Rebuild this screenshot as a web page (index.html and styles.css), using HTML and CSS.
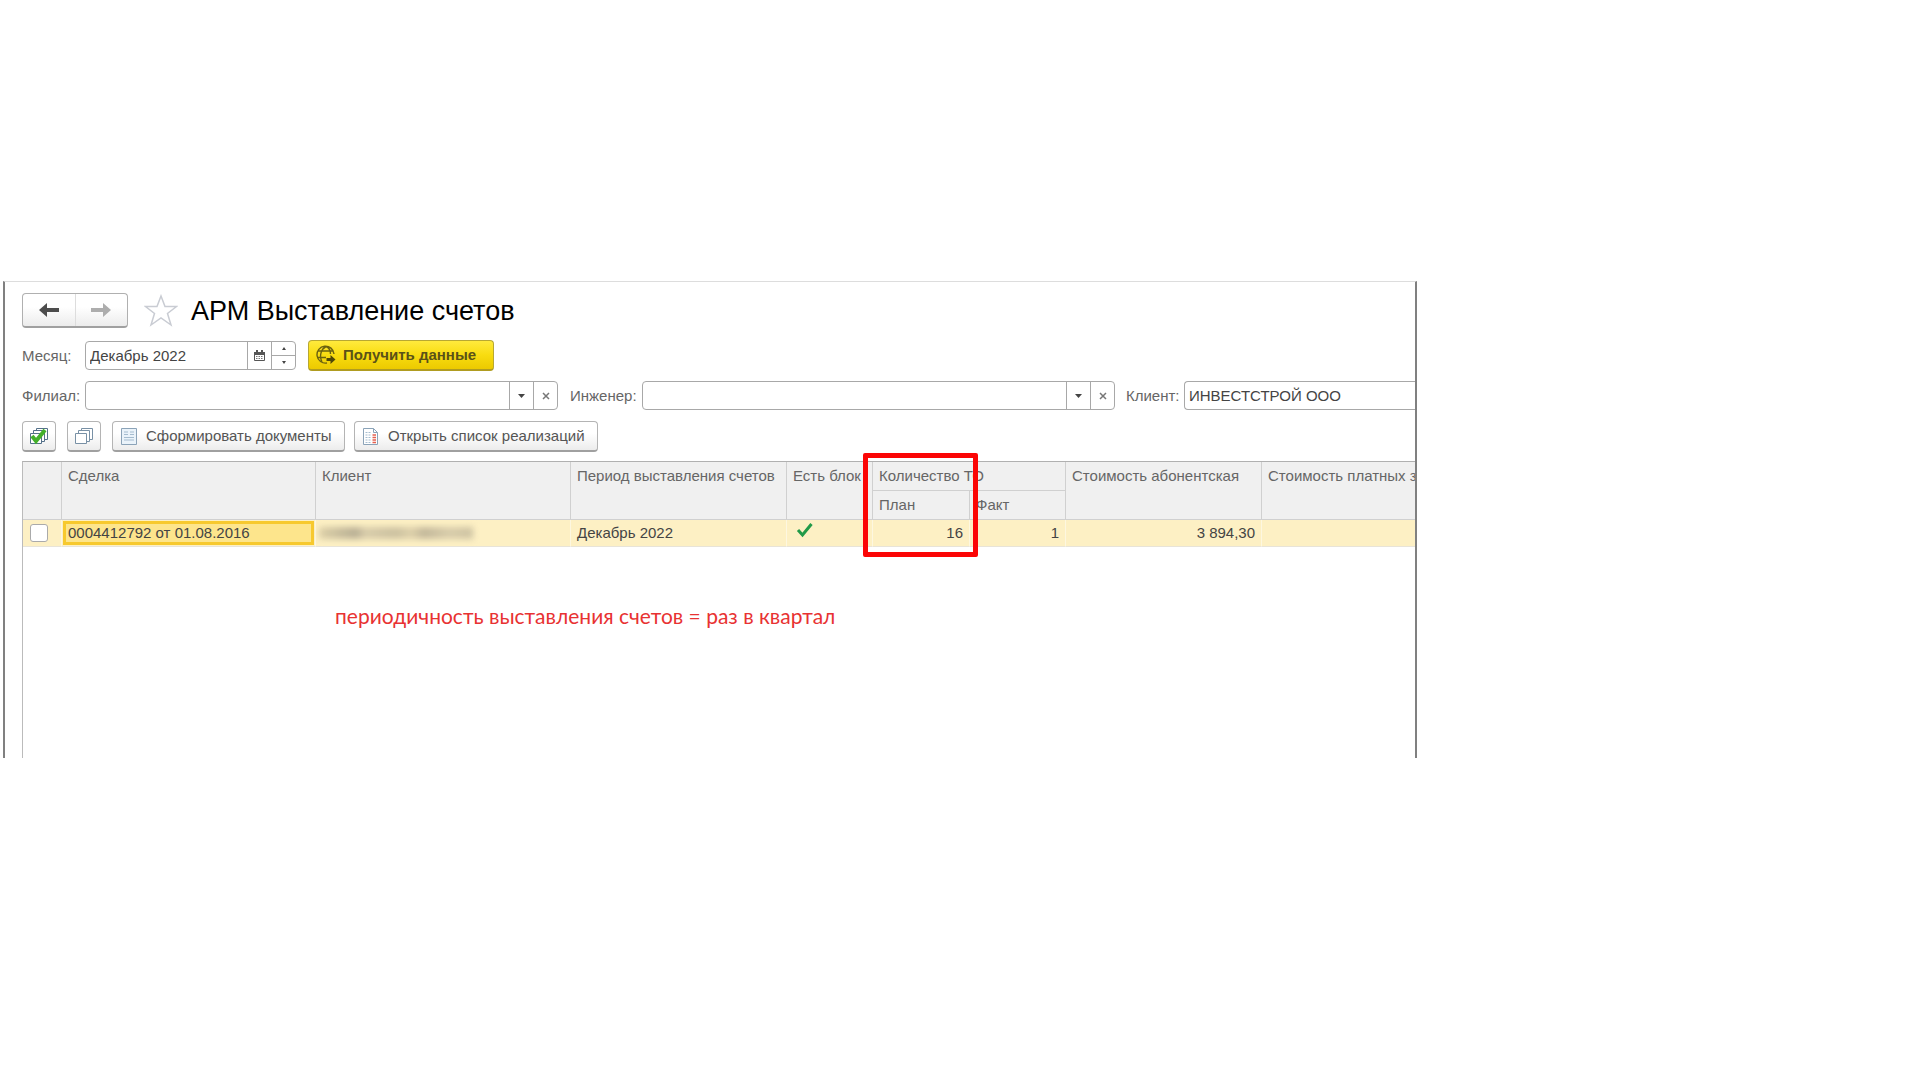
FILE: index.html
```html
<!DOCTYPE html>
<html lang="ru">
<head>
<meta charset="utf-8">
<title>АРМ Выставление счетов</title>
<link rel="stylesheet" href="styles.css">
</head>
<body>
<main class="window">
  <header class="titlebar">
    <div class="nav">
      <button type="button" class="nav-btn" aria-label="Назад"><svg width="22" height="16" viewBox="0 0 22 16"><path d="M1 8L9 1v5h12v4H9v5z" fill="#4d4d4d"/></svg></button>
      <button type="button" class="nav-btn" aria-label="Вперед"><svg width="22" height="16" viewBox="0 0 22 16"><path d="M21 8L13 1v5H1v4h12v5z" fill="#adadad"/></svg></button>
    </div>
    <button type="button" class="star" aria-label="В избранное"><svg width="34" height="33" viewBox="0 0 34 33"><path d="M17 2l4 10.500h11.500l-9 7 3.500 11.500-10-7-10 7 3.500-11.500-9-7H13z" fill="#fff" stroke="#c9ccd3" stroke-width="1.500"/></svg></button>
    <h1>АРМ Выставление счетов</h1>
  </header>

  <div class="row">
    <label class="label-first" for="month">Месяц:</label>
    <div class="field field-month">
      <input id="month" type="text" value="Декабрь 2022">
      <button type="button" class="addon" aria-label="Календарь"><svg width="11" height="12" viewBox="0 0 11 12"><path d="M.5 2.500h10v8H.5z" fill="#fff" stroke="#555"/><path d="M0 2h11v3H0zM2 0h2v3H2zM7 0h2v3H7z" fill="#555"/><path d="M2 6.500h7M2 8.500h7" stroke="#777" stroke-dasharray="1.500 1"/></svg></button>
      <div class="spin">
        <button type="button" aria-label="Больше"><svg width="4" height="3" viewBox="0 0 4 3"><path d="M0 3l2-3 2 3z" fill="#444"/></svg></button>
        <button type="button" aria-label="Меньше"><svg width="4" height="3" viewBox="0 0 4 3"><path d="M0 0l2 3 2-3z" fill="#444"/></svg></button>
      </div>
    </div>
    <button type="button" class="primary"><svg width="20" height="20" viewBox="0 0 20 20" fill="none" stroke="#6b6210" stroke-width="1.400"><path d="M18 9A8.500 8.500 0 1 0 11 18M6 17C3 11 5 4 10 1.500M14.500 9C14.500 5 12.500 2.500 10 1.500M2 6h15.500M2 12.500h8"/><path d="M10.500 13h4v-3l5 4.500-5 4.500v-3h-4z" fill="#4f480a" stroke="none"/></svg>Получить данные</button>
  </div>

  <div class="row">
    <label class="label-first" for="branch">Филиал:</label>
    <div class="field field-wide">
      <input id="branch" type="text">
      <button type="button" class="addon" aria-label="Выбрать"><svg width="7" height="4" viewBox="0 0 7 4"><path d="M0 0h7L3.500 4z" fill="#444"/></svg></button>
      <button type="button" class="addon" aria-label="Очистить"><svg width="8" height="8" viewBox="0 0 8 8"><path d="M1 1l6 6M7 1L1 7" stroke="#777" stroke-width="1.500"/></svg></button>
    </div>
    <label class="label-engineer" for="engineer">Инженер:</label>
    <div class="field field-wide">
      <input id="engineer" type="text">
      <button type="button" class="addon" aria-label="Выбрать"><svg width="7" height="4" viewBox="0 0 7 4"><path d="M0 0h7L3.500 4z" fill="#444"/></svg></button>
      <button type="button" class="addon" aria-label="Очистить"><svg width="8" height="8" viewBox="0 0 8 8"><path d="M1 1l6 6M7 1L1 7" stroke="#777" stroke-width="1.500"/></svg></button>
    </div>
    <label class="label-client" for="client">Клиент:</label>
    <div class="field field-rest">
      <input id="client" type="text" value="ИНВЕСТСТРОЙ ООО">
    </div>
  </div>

  <div class="toolbar">
    <button type="button" class="tool tool-icon" aria-label="Отметить все"><svg width="18" height="18" viewBox="0 0 18 18" fill="#fff" stroke="#55718a"><path d="M6.500 1.500h11v11h-11z"/><path d="M3.500 3.500h11v11h-11z"/><path d="M.5 6.500h11v10H.5z"/><path d="M2 9l4 5 9-11" fill="none" stroke="#43b02a" stroke-width="4"/></svg></button>
    <button type="button" class="tool tool-icon" aria-label="Снять отметки"><svg width="18" height="18" viewBox="0 0 18 18" fill="#fff" stroke="#7890a5"><path d="M6.500 1.500h11v11h-11z"/><path d="M3.500 3.500h11v11h-11z"/><path d="M.5 6.500h11v10H.5z"/></svg></button>
    <button type="button" class="tool tool-text tool-create"><svg width="16" height="17" viewBox="0 0 16 17"><path d="M.5.5h15v16H.5z" fill="#eaf3fa" stroke="#8ba3b8"/><path d="M3 4h4M3 6.500h4M9 4h4M9 6.500h4M3 9.500h10M3 12h10" stroke="#a5bccf"/></svg>Сформировать документы</button>
    <button type="button" class="tool tool-text tool-open"><svg width="16" height="17" viewBox="0 0 16 17"><path d="M.5.500h10l4 4v12H.5z" fill="#fff" stroke="#8ba3b8"/><path d="M10.500.500v4h4" fill="none" stroke="#8ba3b8"/><path d="M2.500 4.500h6M2.500 7h6M2.500 9.500h6M2.500 12h6M2.500 14.500h6" stroke="#a5bccf" stroke-dasharray="2 1"/><path d="M9.500 7h3.500M9.500 9.500h3.500M9.500 12h3.500M9.500 14.500h3.500" stroke="#e5604f" stroke-width="1.500"/></svg>Открыть список реализаций</button>
  </div>

  <section class="list">
    <table>
      <colgroup>
        <col class="c-check"><col class="c-deal"><col class="c-client"><col class="c-period"><col class="c-block"><col class="c-plan"><col class="c-fact"><col class="c-cost"><col class="c-paid">
      </colgroup>
      <thead>
        <tr>
          <th rowspan="2"></th><th rowspan="2">Сделка</th><th rowspan="2">Клиент</th><th rowspan="2">Период выставления счетов</th><th rowspan="2">Есть блок</th><th colspan="2">Количество ТО</th><th rowspan="2">Стоимость абонентская</th><th rowspan="2">Стоимость платных заявок</th>
        </tr>
        <tr><th>План</th><th>Факт</th></tr>
      </thead>
      <tbody>
        <tr>
          <td class="check"><input type="checkbox" aria-label="Выбрать строку"></td>
          <td class="current">0004412792 от 01.08.2016</td>
          <td><span class="redacted"></span></td>
          <td>Декабрь 2022</td>
          <td><svg class="tick" width="18" height="16" viewBox="0 0 18 16"><path d="M2 8l4.500 5L15.500 2" fill="none" stroke="#219a48" stroke-width="3"/></svg></td>
          <td class="num">16</td>
          <td class="num">1</td>
          <td class="num">3 894,30</td>
          <td></td>
        </tr>
      </tbody>
    </table>
    <div class="highlight"></div>
    <p class="note">периодичность выставления счетов = раз в квартал</p>
  </section>
</main>
</body>
</html>
```
FILE: styles.css
```css
* { box-sizing: border-box; }

body {
  margin: 0;
  padding: 281px 503px 0 3px;
  background: #fff;
  color: #444;
  font: 15px/18px "Liberation Sans", Arial, sans-serif;
}

button, input { margin: 0; font: inherit; color: inherit; }
button { display: flex; align-items: center; justify-content: center; padding: 0; }
svg { display: block; flex: none; }

.window {
  border: 2px solid #808080;
  border-top: 1px solid #ddd;
  border-bottom: 0;
  padding: 11px 0 0 17px;
  overflow: hidden;
}

.titlebar { display: flex; align-items: center; height: 35px; margin-bottom: 13px; }
.nav {
  display: flex;
  width: 106px;
  height: 35px;
  border: 1px solid #b0b0b0;
  border-bottom: 2px solid #a0a0a0;
  border-radius: 4px;
  background: linear-gradient(#fff 40%, #ececec);
}
.nav-btn { flex: 1; border: 0; background: none; }
.nav-btn + .nav-btn { border-left: 1px solid #ddd; }
.star { margin: 0 13px 0 16px; border: 0; background: none; }
h1 { margin: 0; color: #000; font-size: 27px; line-height: 32px; font-weight: 400; }

.row { display: flex; align-items: center; height: 29px; margin-bottom: 12px; color: #666; }
.row + .row { margin-top: -1px; margin-bottom: 13px; }
.row label { flex: none; white-space: nowrap; }
.label-first { width: 63px; }
.label-engineer { width: 84px; padding-left: 12px; }
.label-client { width: 69px; padding-left: 11px; }

.field {
  display: flex;
  flex: none;
  height: 29px;
  border: 1px solid #a8a8a8;
  border-radius: 4px;
  overflow: hidden;
  background: #fff;
  color: #444;
}
.field input { flex: 1; min-width: 0; border: 0; padding: 0 4px; background: none; outline: 0; }
.field-month { width: 211px; margin-right: 12px; }
.field-wide { width: 473px; }
.field-rest { flex: 1; border-right: 0; border-radius: 4px 0 0 4px; }
.addon { width: 24px; border: 0; border-left: 1px solid #a8a8a8; background: none; }
.spin { display: flex; flex-direction: column; width: 24px; border-left: 1px solid #a8a8a8; }
.spin button { flex: 1; border: 0; background: none; }
.spin button + button { border-top: 1px solid #a8a8a8; }

.primary {
  justify-content: flex-start;
  gap: 7px;
  width: 186px;
  height: 31px;
  padding-left: 7px;
  border: 1px solid #b8a832;
  border-bottom: 2px solid #b09c20;
  border-radius: 4px;
  background: linear-gradient(#ffea3d, #f8dc10 50%, #ecca00);
  color: #5a5218;
  font-weight: 700;
}

.toolbar { display: flex; height: 31px; margin: -2px 0 9px; }
.tool {
  border: 1px solid #b4b4b4;
  border-bottom: 2px solid #a0a0a0;
  border-radius: 4px;
  background: linear-gradient(#fff 40%, #ececec);
  color: #555;
  white-space: nowrap;
}
.tool-icon { width: 34px; margin-right: 11px; }
.tool-text { justify-content: flex-start; gap: 9px; padding-left: 8px; }
.tool-create { width: 233px; margin-right: 9px; }
.tool-open { width: 244px; }

.list { position: relative; min-height: 297px; border-left: 1px solid #bbb; border-top: 1px solid #b0b0b0; }
table { width: 1440px; table-layout: fixed; border-collapse: separate; border-spacing: 0; }
.c-check { width: 39px; }
.c-deal { width: 254px; }
.c-client { width: 255px; }
.c-period { width: 216px; }
.c-block { width: 86px; }
.c-plan { width: 97px; }
.c-fact { width: 96px; }
.c-cost { width: 196px; }
th {
  height: 29px;
  padding: 5px 0 0 6px;
  border-right: 1px solid #d0d0d0;
  border-bottom: 1px solid #d0d0d0;
  background: #f0f0f0;
  color: #666;
  font-weight: 400;
  text-align: left;
  vertical-align: top;
  white-space: nowrap;
}
td {
  height: 27px;
  padding: 0 6px;
  border-right: 1px solid #fdf7e0;
  border-bottom: 1px solid #e8e4d8;
  background: #fdf0c4;
  white-space: nowrap;
}
.check { padding-left: 7px; }
.check input {
  appearance: none;
  display: block;
  width: 18px;
  height: 18px;
  border: 1px solid #aaa;
  border-radius: 3px;
  background: #fff;
}
.current {
  background: #fde58c;
  box-shadow: inset 0 0 0 1px #fdf0c4, inset 0 0 0 4px #f7c92e;
}
.num { text-align: right; }
.tick { margin: -6px 0 0 3px; }
.redacted {
  display: block;
  width: 154px;
  height: 12px;
  margin-left: -3px;
  background: linear-gradient(90deg, #ddd0a8, #b8ae94 24%, #d8ccaa 30%, #cbc0a0 50%, #ddd0aa 60%, #c2b79a 68%, #d8ccaa 85%, #cdc2a2);
  filter: blur(3px);
}

/* Frame drawn over the planned quantity column */
.highlight {
  position: absolute;
  left: 840px;
  top: -9px;
  width: 115px;
  height: 104px;
  border: 5px solid #fb0505;
  border-radius: 2px;
}
.note { margin: 56px 0 0 312px; color: #e83232; font: 21px/26px Lato, "Open Sans", sans-serif; }
```
